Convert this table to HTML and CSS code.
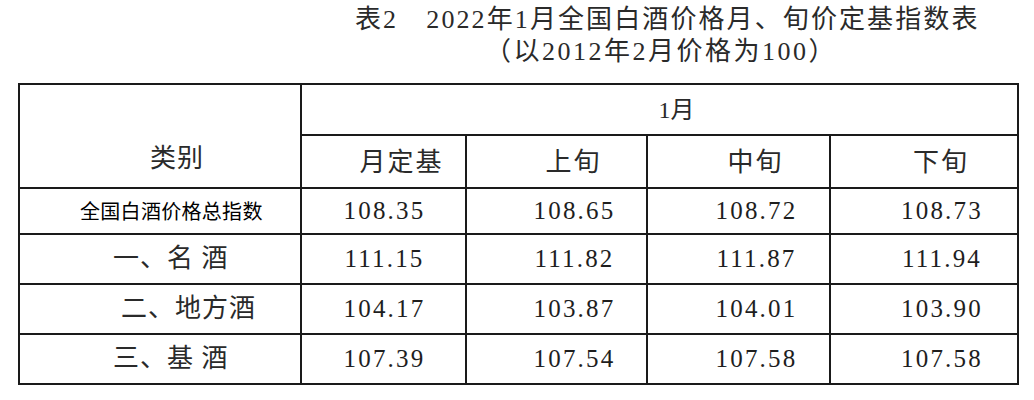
FILE: index.html
```html
<!DOCTYPE html>
<html lang="zh-CN">
<head>
<meta charset="utf-8">
<title>表2 2022年1月全国白酒价格月、旬价定基指数表</title>
<link rel="stylesheet" href="styles.css">
</head>
<body>
<div class="page">
  <div class="title">
    <div class="title-line line1">表2　2022年1月全国白酒价格月、旬价定基指数表</div>
    <div class="title-line line2">（以2012年2月价格为100）</div>
  </div>
  <table class="index-table">
    <colgroup>
      <col class="c1"><col class="c2"><col class="c3"><col class="c4"><col class="c5">
    </colgroup>
    <thead>
      <tr class="r-month">
        <th class="cat" rowspan="2">类别</th>
        <th class="month" colspan="4">1月</th>
      </tr>
      <tr class="r-sub">
        <th class="sub first">月定基</th>
        <th class="sub">上旬</th>
        <th class="sub">中旬</th>
        <th class="sub">下旬</th>
      </tr>
    </thead>
    <tbody>
      <tr class="r-first">
        <td class="label total">全国白酒价格总指数</td>
        <td class="num first">108.35</td>
        <td class="num">108.65</td>
        <td class="num">108.72</td>
        <td class="num">108.73</td>
      </tr>
      <tr>
        <td class="label">一、名 酒</td>
        <td class="num first">111.15</td>
        <td class="num">111.82</td>
        <td class="num">111.87</td>
        <td class="num">111.94</td>
      </tr>
      <tr>
        <td class="label indent">二、地方酒</td>
        <td class="num first">104.17</td>
        <td class="num">103.87</td>
        <td class="num">104.01</td>
        <td class="num">103.90</td>
      </tr>
      <tr>
        <td class="label">三、基 酒</td>
        <td class="num first">107.39</td>
        <td class="num">107.54</td>
        <td class="num">107.58</td>
        <td class="num">107.58</td>
      </tr>
    </tbody>
  </table>
</div>
</body>
</html>
```
FILE: styles.css
```css
html, body {
  margin: 0;
  padding: 0;
  background: #ffffff;
}

.page {
  width: 1034px;
  height: 400px;
  padding-top: 4px;
  box-sizing: border-box;
  font-family: "Liberation Serif", "Noto Sans CJK SC", serif;
  color: #222222;
}

.title-line {
  font-size: 26px;
  line-height: 32px;
  white-space: nowrap;
  color: #2a2a2a;
}

.line1 {
  padding-left: 355px;
  letter-spacing: 2.1px;
}

.line2 {
  padding-left: 485px;
  letter-spacing: 2.5px;
}

.index-table {
  margin-top: 15px;
  margin-left: 18px;
  width: 1000px;
  table-layout: fixed;
  border-collapse: collapse;
}

.c1 { width: 282px; }
.c2 { width: 165px; }
.c3 { width: 181px; }
.c4 { width: 183px; }
.c5 { width: 188px; }

.index-table th,
.index-table td {
  border: 2px solid #1a1a1a;
  padding: 0;
  font-weight: normal;
  text-align: center;
  vertical-align: middle;
  white-space: nowrap;
}

.r-month th { height: 49px; }
.r-sub th { height: 48px; }
.index-table tbody td { height: 48px; }
.index-table tbody .r-first td { height: 44px; }

.cat {
  font-size: 26px;
  line-height: 30px;
  vertical-align: bottom !important;
  padding: 0 0 13px 34px !important;
  letter-spacing: 1px;
  color: #2a2a2a;
}

.month {
  font-size: 24px;
  line-height: 30px;
  padding-left: 34px !important;
  color: #2a2a2a;
}

.sub {
  font-size: 26px;
  line-height: 30px;
  letter-spacing: 2px;
  padding-left: 34px !important;
  padding-top: 3px !important;
  color: #2a2a2a;
}

.sub.first {
  padding-left: 36px !important;
}

.num {
  font-size: 25px;
  line-height: 30px;
  letter-spacing: 2.2px;
  padding-left: 36px !important;
  color: #1e1e1e;
}

.num.first {
  padding-left: 2px !important;
}

.label {
  text-align: left !important;
  padding-left: 93px !important;
  font-size: 26px;
  line-height: 30px;
  letter-spacing: 1px;
  color: #2a2a2a;
}

.label.indent {
  padding-left: 101px !important;
}

.label.total {
  padding-left: 60px !important;
  font-family: "Noto Sans CJK SC", sans-serif;
  font-size: 20px;
  line-height: 24px;
  letter-spacing: 0.3px;
  color: #000000;
}
```
